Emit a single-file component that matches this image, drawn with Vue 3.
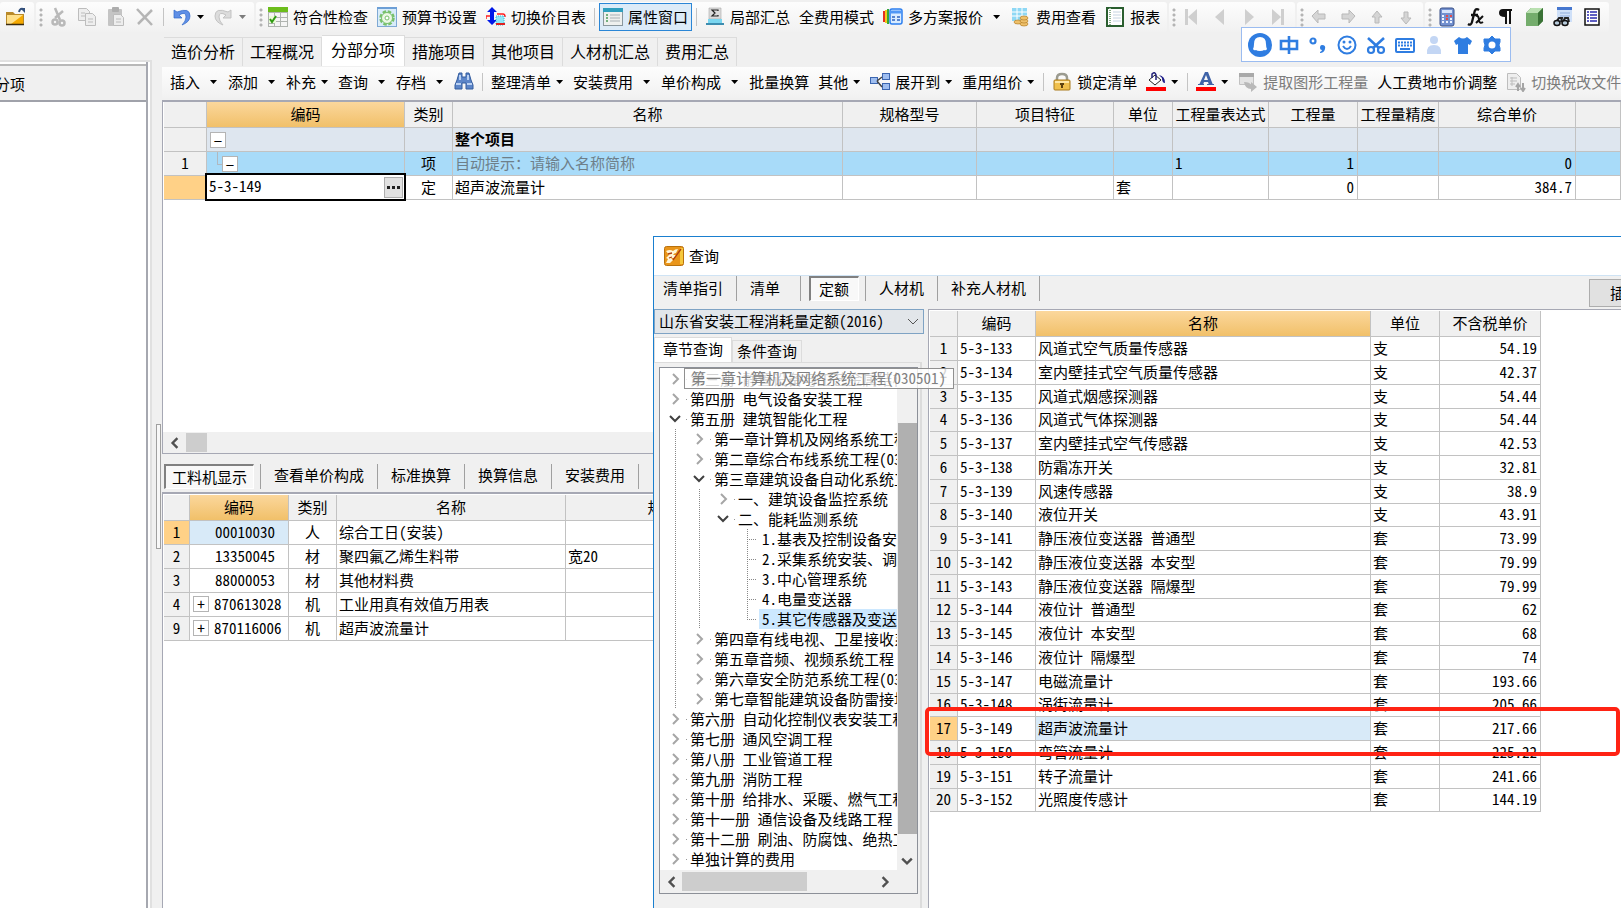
<script setup>
import { ref } from 'vue'

const icons = {
  folder: '<path d="M0 5h7l2 2h9v11H0z" fill="#b98a2a"/><path d="M1 8h16v9H1z" fill="#ffe08a"/><path d="M5 17L17 8v9z" fill="#f5a900"/><path d="M0 17.500h18" stroke="#3c2c10" stroke-width="1.500"/><path d="M13 5q1-4 4-3" fill="none" stroke="#33507c" stroke-width="2"/><path d="M14 1h5v5z" fill="#33507c"/>',
  cut: '<g fill="none" stroke="#b9b9b9" stroke-width="2.500"><path d="M7 1l5 12M15 4L7 11"/><circle cx="7" cy="15" r="2.500"/><circle cx="14" cy="16" r="2.500"/></g>',
  copy: '<g fill="#eee" stroke="#bdbdbd"><path d="M1.500 1.500h8l3 3v9h-11z"/><path d="M8.500 6.500h7l3 3v9h-10z"/><path d="M4 6h4M4 9h4M11 12h5M11 15h5"/></g>',
  paste: '<rect x="2" y="2" width="14" height="17" rx="1" fill="#c4c4c4"/><rect x="6" y="0" width="7" height="5" rx="1" fill="#adadad"/><path d="M7.500 7.500h7l3 3v8h-10z" fill="#ededed" stroke="#bcbcbc"/><path d="M10 12h5M10 15h5" stroke="#bcbcbc"/>',
  del: '<path d="M2 2l15 16M17 3L3 17" stroke="#b5b5b5" stroke-width="2.500" fill="none"/>',
  undo: '<path d="M2 3v8h8L7 8q7-4 7 2 0 4-4 8 8-3 8-9 0-9-13-4z" fill="#5f8fe6" stroke="#2f67c9" stroke-width=".7"/>',
  redo: '<path d="M17 3v8H9l3-3Q5 4 5 10q0 4 4 8-8-3-8-9 0-9 13-4z" fill="#dcdcdc" stroke="#c3c3c3"/>',
  check: '<path d="M0 0h20v20H0z" fill="#b0b4b0"/><path d="M0 0h20v5H0z" fill="#6cbd1c"/><path d="M1 6h5v4H1zm6 0h5v4H7zm6 0h6v4h-6zM7 11h5v3H7zm6 0h6v3h-6zM1 17h5v2H1zM7 15h5v4H7zm6 0h6v4h-6z" fill="#f5f5f5"/><path d="M1 9h7v7H1z" fill="#eafbd8"/><path d="M2 12l2 3 4-6" fill="none" stroke="#2f9b13" stroke-width="2"/>',
  gear: '<rect x=".5" y=".5" width="19" height="19" fill="#d9ecfa" stroke="#7fa9d4"/><path d="M0 1h20" stroke="#6d9fd6" stroke-width="2"/><circle cx="10" cy="11" r="6.500" fill="none" stroke="#77c06a" stroke-width="2.500" stroke-dasharray="3.500 1.600"/><circle cx="10" cy="11" r="5.500" fill="#ecf8e5" stroke="#77c06a"/><circle cx="10" cy="11" r="2" fill="#fff" stroke="#77c06a"/>',
  swap: '<path d="M6 0l5 5H8v8h3l-5 5-5-5h3V5H1z" fill="#0018e8"/><path d="M0 9h4M11 7h6q2 0 2 3M0 9v3" stroke="#ff2020" stroke-width="1.500" fill="none"/><path d="M10 9h8v9h-8z" fill="#8fe8f8" stroke="#38b8d8" stroke-dasharray="1 1"/><path d="M10 17h9" stroke="#e02020" stroke-width="2"/>',
  panel: '<rect x=".5" y="1.500" width="19" height="17" fill="#eef0ee" stroke="#8a979d"/><path d="M0 1h20v4H0z" fill="#2f9fbe"/><path d="M3 8h2M3 11h2M3 14h2" stroke="#4b9b5a" stroke-width="1.500"/><path d="M7 8h10M7 11h10M7 14h10" stroke="#a8b0b4"/>',
  sigma: '<path d="M4 1h12v11H4z" fill="#dcdcdc" stroke="#aaa" stroke-width=".6"/><path d="M13 4V3H7l3 3-3 3h6V8" fill="none" stroke="#222" stroke-width="1.200"/><path d="M3 12h14v4H3z" fill="#7ad6f0"/><path d="M1 17h18" stroke="#3d8db0" stroke-width="2"/>',
  multi: '<path d="M1 4v11" stroke="#e53020" stroke-width="2"/><path d="M3 3v13" stroke="#f3c91c" stroke-width="2"/><path d="M5 2v15" stroke="#38a838" stroke-width="2"/><rect x="7" y="2" width="12" height="15" rx="2" fill="#d9ecff" stroke="#2d7ff0" stroke-width="1.500"/><path d="M7 5h12" stroke="#4f97f6" stroke-width="3"/><path d="M9 10h3M14 10h3M9 13h3M14 13h3" stroke="#2d62c0" stroke-width="1.500"/>',
  coins: '<path d="M1 1h15v13H1z" fill="#8ed8f5"/><path d="M1 5h15M1 9h15M6 1v13M11 1v13" stroke="#fff"/><g fill="#eec06a" stroke="#b57f28" stroke-width=".7"><ellipse cx="7" cy="15" rx="4" ry="2"/><ellipse cx="13" cy="17" rx="4" ry="2"/><ellipse cx="13" cy="14" rx="4" ry="2"/><ellipse cx="13" cy="11" rx="4" ry="2"/></g>',
  report: '<rect x="2" y="1" width="16" height="18" fill="#fff" stroke="#2a5e2f" stroke-width="2"/><path d="M5 1v18" stroke="#8bb08f" stroke-width="2" stroke-dasharray="1 1"/><path d="M8 5h8M8 8h8M8 11h8M8 14h8" stroke="#c6d4e2"/>',
  first: '<path d="M4 2h3v16H4zM16 2v16L7 10z" fill="#cfcfcf"/>',
  prev: '<path d="M14 2v16L5 10z" fill="#cfcfcf"/>',
  next: '<path d="M6 2v16l9-8z" fill="#cfcfcf"/>',
  last: '<path d="M13 2h3v16h-3zM4 2v16l9-8z" fill="#cfcfcf"/>',
  left: '<path d="M3 9l6-6v4h7v5H9v4z" fill="#d5d5d5" stroke="#b9b9b9"/>',
  right: '<path d="M17 9l-6-6v4H4v5h7v4z" fill="#d5d5d5" stroke="#b9b9b9"/>',
  up: '<path d="M10 4l5 6h-3v6H8v-6H5z" fill="#d5d5d5" stroke="#b9b9b9"/>',
  down: '<path d="M10 17l5-6h-3V5H8v6H5z" fill="#d5d5d5" stroke="#b9b9b9"/>',
  calc: '<rect x="3" y="1" width="14" height="18" rx="2" fill="#7391d0" stroke="#384f86"/><path d="M5 3h10v3H5z" fill="#d6e4fb"/><path d="M5 9h10M5 12h10M5 15h10" stroke="#eef3ff" stroke-width="2" stroke-dasharray="2 2"/><path d="M9 9h6M9 12h2" stroke="#e24b4b" stroke-width="2" stroke-dasharray="2 2"/>',
  fx: '<path d="M13 3q-4-3-5 4L6 15q-1 4-4 2M5 8h7" fill="none" stroke="#111" stroke-width="2.300"/><path d="M10 9q3-1 3 5 1 3 4 1M17 9l-7 7" fill="none" stroke="#111" stroke-width="2"/>',
  para: '<path d="M6 2h11v2h-1v13h-2V4h-2v13h-2v-7Q4 10 4 6q0-4 4-4z" fill="#111"/>',
  cube: '<path d="M2 6l5-5h12v13l-5 5H2z" fill="#4b8a45"/><path d="M2 6l5-5h12l-5 5z" fill="#b9e0b0"/><path d="M2 6h12v13H2z" fill="#74ad6c"/><path d="M14 6l5-5v13l-5 5z" fill="#3a7236"/>',
  find2: '<path d="M4 0h15v15H4z" fill="#cfe0f8"/><path d="M4 0h15v3H4z" fill="#4677cf"/><path d="M7 6h10M7 9h10" stroke="#8facdc"/><path d="M3 15l3-4h3l-1 4M10 15l2-4h3l1 4" fill="none" stroke="#222" stroke-width="2"/><ellipse cx="4" cy="16" rx="3" ry="2.500" fill="#b8ccdc" stroke="#111" stroke-width="1.500"/><ellipse cx="12" cy="16" rx="3" ry="2.500" fill="#b8ccdc" stroke="#111" stroke-width="1.500"/>',
  list: '<rect x="3" y="2" width="14" height="16" fill="#fff" stroke="#111" stroke-width="1.500"/><path d="M5 5h2M5 8h2M5 11h2M5 14h2M8 5h7M8 8h7M8 11h7M8 14h7" stroke="#2b2bb0" stroke-width="1.500"/>',
  binoc: '<path d="M5 1h3v4h4V1h3l2 7 2 5v4h-7v-6H8v6H1v-4l2-5z" fill="#5c85c8" stroke="#335c9e"/><path d="M2 12h5M13 12h5M6 3v5M14 3v5" stroke="#b9d0f2" stroke-width="2"/>',
  tree: '<g fill="#9fbef0" stroke="#3c66b0"><rect x=".5" y="5.500" width="7" height="6"/><rect x="12.500" y="1.500" width="7" height="6"/><rect x="12.500" y="11.500" width="7" height="6"/></g><path d="M7 9l5-4M7 9l5 6" stroke="#444" stroke-width="1.500" fill="none"/>',
  lock: '<path d="M5 9V6q0-4 5-4t5 4v3" fill="none" stroke="#9b9b90" stroke-width="2.500"/><rect x="2" y="8" width="16" height="10" rx="1" fill="#f0c04c" stroke="#a97a1c"/><path d="M3 10h14" stroke="#ffe7a4" stroke-width="2"/><path d="M10 11v5M8 12h4" stroke="#5d4210" stroke-width="2"/>',
  fill: '<path d="M9 3l6 5-6 5-6-5z" fill="#fff" stroke="#222"/><path d="M6 6V2q3-3 4 1v5" fill="none" stroke="#22227a" stroke-width="1.500"/><path d="M13 3q6 1 6 8-3 0-3-5z" fill="#1d1d8a"/><path d="M0 15h20v4H0z" fill="#f00"/>',
  font: '<path d="M9 0h3l5 13h-4l-1-3H8l-1 3H3zM10 3L8 8h4z" fill="#3f63a8" fill-rule="evenodd"/><path d="M2 12.500h6M11 12.500h7" stroke="#3f63a8"/><path d="M0 15h20v4H0z" fill="#f00"/>',
  extract: '<path d="M1.500 1.500h14v11h-14z" fill="#e4e4e4" stroke="#c2c2c2"/><path d="M1 1h15v4H1z" fill="#a9a9a9"/><path d="M6 10q6 0 7 3v-3l6 5-6 5v-3q-6 0-7-7z" fill="#b9b9b9"/>',
  tax: '<path d="M1.500 1.500h9l4 4v12h-13z" fill="#eee" stroke="#bdbdbd"/><path d="M4 6h7M4 9h7M4 12h5M6 5v9" stroke="#bdbdbd"/><path d="M12 19v-6M10 15l2-3 2 3M17 11v7M15 16l2 3 2-3" stroke="#a5a5a5" stroke-width="2" fill="none"/>',
  app: '<rect x=".5" y=".5" width="19" height="19" rx="2" fill="#e9951a" stroke="#b9710c"/><path d="M16 2h3v16h-3z" fill="#f6c83c"/><path d="M2 5q4-2 7 0 2-2 5-2l-2 4q-2 0-3 2l3 0-2 3-3 0 2 2-3 3H2l2-4-2-1 3-3z" fill="#fff5d8"/><path d="M17 3L9 14M4 8l4-1M5 12l3-1" stroke="#b03c10" stroke-width="1.300"/>',
  chat: '<circle cx="12" cy="12" r="12" fill="#2f7de1"/><path d="M12 4q6 0 6 7 0 3 1 5-1 2-3 1-1 1-4 1t-4-1q-2 1-3-1 1-2 1-5 0-7 6-7z" fill="#fff"/>',
  zhong: '<path d="M4 8h16v8H4zM12 3v18" fill="none" stroke="#2f7de1" stroke-width="2.600"/>',
  punct: '<circle cx="7" cy="8" r="2.500" fill="none" stroke="#2f7de1" stroke-width="2.200"/><path d="M16 12q4 0 3 4-1 4-5 4l0-1q2-1 2-2-2 0-2-2 0-3 2-3z" fill="#2f7de1"/>',
  smile: '<circle cx="12" cy="12" r="8.500" fill="none" stroke="#2f7de1" stroke-width="2"/><path d="M8 13q4 6 8 0" fill="none" stroke="#2f7de1" stroke-width="2"/><circle cx="9" cy="9" r="1.500" fill="#2f7de1"/><circle cx="15" cy="9" r="1.500" fill="#2f7de1"/>',
  scissors: '<path d="M4 5l12 11M20 5L8 16" stroke="#2f7de1" stroke-width="2.600"/><circle cx="7" cy="17" r="3" fill="#fff" stroke="#2f7de1" stroke-width="2.200"/><circle cx="17" cy="17" r="3" fill="#fff" stroke="#2f7de1" stroke-width="2.200"/>',
  keyboard: '<rect x="3" y="6" width="18" height="13" rx="1" fill="none" stroke="#2f7de1" stroke-width="2"/><path d="M5 9.500h14M5 12.500h14" stroke="#2f7de1" stroke-width="2" stroke-dasharray="2 1"/><path d="M7 16h10" stroke="#2f7de1" stroke-width="2"/>',
  user: '<circle cx="12" cy="7" r="4" fill="#c3d6f4"/><path d="M5 21q-1-9 7-9t7 9z" fill="#c3d6f4"/>',
  shirt: '<path d="M8 4q4 3 8 0l5 4-2 4-2-1v10H7V11l-2 1-2-4z" fill="#2f7de1"/>',
  cog: '<path d="M12 3l3 3 5 0 0 3-1 3 1 3 0 3-5 0-3 3-3-3-5 0 0-3 1-3-1-3 0-3 5 0z" fill="#2f7de1" stroke="#2f7de1"/><circle cx="12" cy="12" r="3.500" fill="#fff"/>'
}

const groups = [
  { items: [{ icon: 'folder', label: '打开' }] },
  {
    grip: true,
    items: [
      { icon: 'cut', label: '剪切' }, { icon: 'copy', label: '复制' }, { icon: 'paste', label: '粘贴' }, { icon: 'del', label: '删除' },
      { sep: true }, { icon: 'undo', label: '撤销', arrow: 'tight' }, { icon: 'redo', label: '重做', arrow: 'tight', dim: true }
    ]
  },
  {
    grip: true,
    items: [
      { icon: 'check', text: '符合性检查' }, { icon: 'gear', text: '预算书设置' }, { icon: 'swap', text: '切换价目表' }, { sep: true },
      { icon: 'panel', text: '属性窗口', active: true }, { sep: true }, { icon: 'sigma', text: '局部汇总' }, { text: '全费用模式' },
      { icon: 'multi', text: '多方案报价', arrow: 'split' }, { icon: 'coins', text: '费用查看' }, { icon: 'report', text: '报表' }
    ]
  },
  {
    grip: true,
    items: [{ icon: 'first', label: '首条' }, { icon: 'prev', label: '上一条' }, { icon: 'next', label: '下一条' }, { icon: 'last', label: '末条' }]
  },
  {
    grip: true,
    items: [{ icon: 'left', label: '升级' }, { icon: 'right', label: '降级' }, { icon: 'up', label: '上移' }, { icon: 'down', label: '下移' }]
  },
  {
    grip: true,
    items: [
      { icon: 'calc', label: '计算器' }, { icon: 'fx', label: '函数' }, { icon: 'para', label: '段落' },
      { icon: 'cube', label: '图形' }, { icon: 'find2', label: '查找' }, { icon: 'list', label: '列表' }
    ]
  }
]

const tools = [
  { text: '插入', arrow: 'split' }, { text: '添加', arrow: 'split' }, { text: '补充', arrow: 'tight' }, { text: '查询', arrow: 'split' },
  { text: '存档', arrow: 'split' }, { icon: 'binoc', label: '查找' }, { sep: true }, { text: '整理清单', arrow: 'tight' },
  { text: '安装费用', arrow: 'split' }, { text: '单价构成', arrow: 'split' }, { text: '批量换算' }, { text: '其他', arrow: 'tight' },
  { icon: 'tree', text: '展开到', arrow: 'tight' }, { text: '重用组价', arrow: 'tight' }, { sep: true }, { icon: 'lock', text: '锁定清单' },
  { icon: 'fill', label: '填充颜色', arrow: 'tight' }, { sep: true }, { icon: 'font', label: '字体颜色', arrow: 'tight' },
  { icon: 'extract', text: '提取图形工程量', dim: true }, { text: '人工费地市价调整' }, { icon: 'tax', text: '切换税改文件', dim: true }
]

const mainTabs = ['造价分析', '工程概况', '分部分项', '措施项目', '其他项目', '人材机汇总', '费用汇总']
const mainTab = ref('分部分项')
const mainHead = ['', '编码', '类别', '名称', '规格型号', '项目特征', '单位', '工程量表达式', '工程量', '工程量精度', '综合单价', '']
const code = ref('5-3-149')

const detailTabs = ['工料机显示', '查看单价构成', '标准换算', '换算信息', '安装费用']
const detailTab = ref('工料机显示')
const details = [
  { n: 1, code: '00010030', kind: '人', name: '综合工日(安装)', spec: '' },
  { n: 2, code: '13350045', kind: '材', name: '聚四氟乙烯生料带', spec: '宽20' },
  { n: 3, code: '88000053', kind: '材', name: '其他材料费', spec: '' },
  { n: 4, code: '870613028', kind: '机', name: '工业用真有效值万用表', spec: '', plus: true },
  { n: 9, code: '870116006', kind: '机', name: '超声波流量计', spec: '', plus: true }
]

const imeItems = [
  ['chat', '输入法'], ['zhong', '中文'], ['punct', '标点'], ['smile', '表情'], ['scissors', '截图'],
  ['keyboard', '键盘'], ['user', '账户'], ['shirt', '皮肤'], ['cog', '设置']
]

const queryTabs = ['清单指引', '清单', '定额', '人材机', '补充人材机']
const queryTab = ref('定额')
const library = ref('山东省安装工程消耗量定额(2016)')

const nodes = [
  { d: 0, text: '第三册 静置设备与工艺金属结构' },
  { d: 0, text: '第四册 电气设备安装工程' },
  { d: 0, text: '第五册 建筑智能化工程', open: true },
  { d: 1, text: '第一章计算机及网络系统工程(030501)' },
  { d: 1, text: '第二章综合布线系统工程(030502)' },
  { d: 1, text: '第三章建筑设备自动化系统工程', open: true },
  { d: 2, text: '一、建筑设备监控系统' },
  { d: 2, text: '二、能耗监测系统', open: true },
  { d: 3, text: '1.基表及控制设备安装' },
  { d: 3, text: '2.采集系统安装、调试' },
  { d: 3, text: '3.中心管理系统' },
  { d: 3, text: '4.电量变送器' },
  { d: 3, text: '5.其它传感器及变送器', selected: true },
  { d: 1, text: '第四章有线电视、卫星接收系统' },
  { d: 1, text: '第五章音频、视频系统工程' },
  { d: 1, text: '第六章安全防范系统工程(030507)' },
  { d: 1, text: '第七章智能建筑设备防雷接地' },
  { d: 0, text: '第六册 自动化控制仪表安装工程' },
  { d: 0, text: '第七册 通风空调工程' },
  { d: 0, text: '第八册 工业管道工程' },
  { d: 0, text: '第九册 消防工程' },
  { d: 0, text: '第十册 给排水、采暖、燃气工程' },
  { d: 0, text: '第十一册 通信设备及线路工程' },
  { d: 0, text: '第十二册 刷油、防腐蚀、绝热工程' },
  { d: 0, text: '单独计算的费用' }
]

const quota = [
  ['风道式空气质量传感器', '支', '54.19'], ['室内壁挂式空气质量传感器', '支', '42.37'], ['风道式烟感探测器', '支', '54.44'],
  ['风道式气体探测器', '支', '54.44'], ['室内壁挂式空气传感器', '支', '42.53'], ['防霜冻开关', '支', '32.81'],
  ['风速传感器', '支', '38.9'], ['液位开关', '支', '43.91'], ['静压液位变送器 普通型', '套', '73.99'],
  ['静压液位变送器 本安型', '套', '79.99'], ['静压液位变送器 隔爆型', '套', '79.99'], ['液位计 普通型', '套', '62'],
  ['液位计 本安型', '套', '68'], ['液位计 隔爆型', '套', '74'], ['电磁流量计', '套', '193.66'], ['涡街流量计', '套', '205.66'],
  ['超声波流量计', '套', '217.66'], ['弯管流量计', '套', '225.22'], ['转子流量计', '套', '241.66'], ['光照度传感计', '套', '144.19']
]
</script>

<template>
  <div class="app">
    <header class="topbar">
      <div v-for="(g, gi) in groups" :key="gi" class="group">
        <span v-if="g.grip" class="grip"></span>
        <template v-for="(t, ti) in g.items" :key="ti">
          <span v-if="t.sep" class="sep"></span>
          <button v-else class="tool" :class="{ active: t.active, dim: t.dim, roomy: t.arrow }" :aria-label="t.label">
            <svg v-if="t.icon" class="icon" viewBox="0 0 20 20" v-html="icons[t.icon]"></svg>
            <span v-if="t.text">{{ t.text }}</span>
            <span v-if="t.arrow" class="arrow" :class="t.arrow"></span>
          </button>
        </template>
      </div>
    </header>

    <div class="workspace">
      <aside class="side">
        <div class="side-panel">
          <div class="side-head"><span>分部分项</span></div>
          <div class="side-body"></div>
        </div>
      </aside>
      <div class="splitter"><span class="handle"></span></div>

      <main class="main">
        <nav class="main-tabs">
          <button v-for="t in mainTabs" :key="t" :class="{ on: t === mainTab }" @click="mainTab = t">{{ t }}</button>
        </nav>
        <div class="toolbar">
          <template v-for="(t, ti) in tools" :key="ti">
            <span v-if="t.sep" class="sep"></span>
            <button v-else class="tool" :class="{ dim: t.dim, roomy: t.arrow }" :aria-label="t.label">
              <svg v-if="t.icon" class="icon" viewBox="0 0 20 20" v-html="icons[t.icon]"></svg>
              <span v-if="t.text">{{ t.text }}</span>
              <span v-if="t.arrow" class="arrow" :class="t.arrow"></span>
            </button>
          </template>
        </div>

        <section class="pane upper">
          <div class="pane-body">
            <table class="grid main-grid">
              <colgroup>
                <col v-for="(h, i) in mainHead" :key="i" :class="'m' + i" />
              </colgroup>
              <thead>
                <tr><th v-for="(h, i) in mainHead" :key="i" :class="{ gold: i === 1 }">{{ h }}</th></tr>
              </thead>
              <tbody>
                <tr class="group-row">
                  <th></th>
                  <td class="branch"><button class="box" aria-label="折叠整个项目">−</button></td>
                  <td></td><td class="strong">整个项目</td>
                  <td v-for="i in 8" :key="i"></td>
                </tr>
                <tr class="item-row">
                  <th>1</th>
                  <td class="branch nested"><button class="box" aria-label="折叠第1项">−</button></td>
                  <td class="mid">项</td><td class="hint">自动提示：请输入名称简称</td>
                  <td></td><td></td><td></td><td>1</td><td class="num">1</td><td></td><td class="num">0</td><td></td>
                </tr>
                <tr>
                  <th class="current"></th>
                  <td class="editing">
                    <div class="editor">
                      <input v-model="code" aria-label="编码" />
                      <button aria-label="选择定额"><i></i><i></i><i></i></button>
                    </div>
                  </td>
                  <td class="mid">定</td><td>超声波流量计</td>
                  <td></td><td></td><td>套</td><td></td><td class="num">0</td><td></td><td class="num">384.7</td><td></td>
                </tr>
              </tbody>
            </table>
          </div>
          <div class="hscroll">
            <svg viewBox="0 0 10 10"><path d="M7 1L3 5l4 4" /></svg>
            <span class="thumb short"></span>
          </div>
        </section>

        <nav class="flat-tabs detail-tabs">
          <button v-for="t in detailTabs" :key="t" :class="{ on: t === detailTab }" @click="detailTab = t">{{ t }}</button>
        </nav>

        <section class="pane lower">
          <table class="grid detail-grid">
            <colgroup><col class="d0" /><col class="d1" /><col class="d2" /><col class="d3" /><col class="d4" /><col /></colgroup>
            <thead>
              <tr><th></th><th class="gold">编码</th><th>类别</th><th>名称</th><th>规格型号</th><th></th></tr>
            </thead>
            <tbody>
              <tr v-for="(r, i) in details" :key="r.n">
                <th :class="{ current: i === 0 }">{{ r.n }}</th>
                <td class="code" :class="{ picked: i === 0 }">
                  <div><button v-if="r.plus" class="box" :aria-label="'展开' + r.code">+</button><span>{{ r.code }}</span></div>
                </td>
                <td class="mid">{{ r.kind }}</td>
                <td>{{ r.name }}</td>
                <td>{{ r.spec }}</td>
                <td></td>
              </tr>
            </tbody>
          </table>
        </section>
      </main>
    </div>

    <div class="ime">
      <button v-for="[k, l] in imeItems" :key="k" :aria-label="l">
        <svg viewBox="0 0 24 24" v-html="icons[k]"></svg>
      </button>
    </div>

    <section class="dialog" aria-label="查询">
      <div class="title">
        <svg class="icon" viewBox="0 0 20 20" v-html="icons.app"></svg>
        <span>查询</span>
      </div>
      <div class="query-bar">
        <nav class="flat-tabs query-tabs">
          <button v-for="t in queryTabs" :key="t" :class="{ on: t === queryTab }" @click="queryTab = t">{{ t }}</button>
        </nav>
        <button class="insert">插入</button>
      </div>
      <div class="query-body">
        <div class="catalog">
          <div class="combo">
            <select v-model="library" aria-label="定额库">
              <option>山东省安装工程消耗量定额(2016)</option>
            </select>
            <svg viewBox="0 0 12 12"><path d="M1 3l5 5 5-5" /></svg>
          </div>
          <div class="sheet-tabs">
            <button class="on">章节查询</button>
            <button>条件查询</button>
          </div>
          <div class="sheet">
            <div class="tree-box">
              <div class="tree-row">
                <ul class="tree">
                  <li v-for="n in nodes" :key="n.text">
                    <span v-for="g in n.d" :key="g" class="guide" :class="{ line: g < 3 }"></span>
                    <span v-if="n.d === 3" class="elbow" :class="{ end: n.selected }"></span>
                    <button v-else class="chev" :class="{ open: n.open }" :aria-label="n.text">
                      <svg viewBox="0 0 12 12"><path :d="n.open ? 'M1 3l5 5 5-5' : 'M4 1l5 5-5 5'" /></svg>
                    </button>
                    <span class="node" :class="{ selected: n.selected }">{{ n.text }}</span>
                  </li>
                </ul>
                <div class="vscroll">
                  <span class="thumb"></span>
                  <svg viewBox="0 0 10 10"><path d="M1 3l4 4 4-4" /></svg>
                </div>
              </div>
              <div class="hscroll tree-h">
                <svg viewBox="0 0 10 10"><path d="M7 1L3 5l4 4" /></svg>
                <span class="thumb long"></span>
                <svg class="far" viewBox="0 0 10 10"><path d="M3 1l4 4-4 4" /></svg>
              </div>
              <div class="tip">第一章计算机及网络系统工程(030501)</div>
            </div>
          </div>
        </div>
        <div class="result">
          <table class="grid quota-grid">
            <colgroup><col class="q0" /><col class="q1" /><col class="q2" /><col class="q3" /><col class="q4" /></colgroup>
            <thead>
              <tr><th></th><th>编码</th><th class="gold">名称</th><th>单位</th><th>不含税单价</th></tr>
            </thead>
            <tbody>
              <tr v-for="(r, i) in quota" :key="r[0]">
                <th :class="{ current: i === 16 }">{{ i + 1 }}</th>
                <td>5-3-{{ 133 + i }}</td>
                <td :class="{ picked: i === 16 }">{{ r[0] }}</td>
                <td>{{ r[1] }}</td>
                <td class="num">{{ r[2] }}</td>
              </tr>
            </tbody>
          </table>
          <div class="mark"></div>
        </div>
      </div>
    </section>
  </div>
</template>

<style>
body { margin: 0; overflow: hidden; }
</style>

<style scoped>
* { box-sizing: border-box; }
.app {
  position: relative;
  display: flex;
  flex-direction: column;
  height: 100vh;
  overflow: hidden;
  background: #f0f0f0;
  color: #000;
  font-family: "Noto Sans CJK SC", sans-serif;
  font-feature-settings: "hwid";
  font-size: 15px;
  line-height: 20px;
  white-space: nowrap;
}
button, input, select {
  font: inherit;
  font-feature-settings: inherit;
  color: inherit;
  margin: 0;
  padding: 0;
  border: 0;
  background: none;
  white-space: nowrap;
}
.icon { width: 20px; height: 20px; flex: none; }

/* toolbars */
.topbar { display: flex; gap: 2px; padding-top: 2px; height: 35px; flex: none; }
.group {
  display: flex;
  align-items: center;
  gap: 1px;
  height: 30px;
  padding-right: 3px;
  flex: none;
  border-radius: 3px;
  background: linear-gradient(#fdfdfd, #f1f1f1);
}
.group:first-child { padding-left: 2px; padding-right: 4px; }
.grip {
  width: 7px;
  height: 19px;
  background: radial-gradient(circle at 5px 2px, #b4b4b4 1px, transparent 2px);
  background-size: 7px 5px;
}
.tool { display: flex; align-items: center; gap: 5px; height: 28px; padding: 0 4px; flex: none; }
.tool.active { background: #dcebf8; box-shadow: inset 0 0 0 1px #2b86d6; }
.tool.dim { color: #7c7c7c; }
.tool.roomy { padding-right: 5px; }
.sep { width: 1px; height: 18px; margin: 0 3px; background: #c4c4c4; flex: none; }
.arrow {
  width: 7px;
  height: 4px;
  background: currentColor;
  clip-path: polygon(0 0, 100% 0, 50% 100%);
}
.arrow.split { margin: 0 1px 0 5px; }
.toolbar {
  display: flex;
  align-items: center;
  gap: 1px;
  height: 31px;
  padding: 0 0 1px 4px;
  flex: none;
  overflow: hidden;
  background: linear-gradient(#fdfdfd, #f1f1f1);
}

/* left side */
.workspace { display: flex; flex: 1; min-height: 0; }
.side { width: 152px; flex: none; margin-top: 25px; border-top: 2px solid #e0e0e0; border-right: 2px solid #e0e0e0; background: #fff; }
.side-panel { display: flex; flex-direction: column; height: 100%; width: 148px; padding-top: 2px; border-right: 2px solid #a6a8b0; }
.side-head { display: flex; justify-content: flex-end; height: 38px; padding: 8px 121px 0 0; border-top: 2px solid #b8b8b8; border-bottom: 2px solid #a0a2aa; background: #f0f0f0; }
.side-body { flex: 1; background: #fff; }
.splitter { display: flex; align-items: center; justify-content: center; width: 10px; padding-top: 30px; flex: none; }
.handle { width: 5px; height: 125px; margin-left: 2px; border: 1px solid #a0a0a0; background: #f8f8f8; }

/* main area */
.main { display: flex; flex-direction: column; flex: 1; min-width: 0; }
.main-tabs { display: flex; align-items: flex-end; height: 32px; padding-left: 2px; flex: none; font-size: 16px; border-bottom: 1px solid #f0f0f0; }
.main-tabs button { height: 29px; padding: 0 7px 2px; border: 1px solid #dcdcdc; border-width: 1px 1px 0 0; }
.main-tabs .on { height: 31px; padding: 0 9px 4px; background: #fff; }
.pane { border: 1px solid #a6a8b4; border-width: 2px 0 0 1px; background: #fff; }
.upper { display: flex; flex-direction: column; flex: none; margin-top: 2px; border-bottom-width: 1px; }
.pane-body { height: 330px; padding-left: 1px; }
.lower { flex: 1; padding: 1px 0 0 1px; }

.grid { border-collapse: separate; border-spacing: 0; table-layout: fixed; }
.grid th, .grid td {
  height: 24px;
  padding: 0 2px 2px;
  border: 1px solid #c2c2c2;
  border-width: 0 1px 1px 0;
  font-weight: 400;
  text-align: left;
  line-height: 20px;
  overflow: hidden;
}
.grid th { background: #f0f0f0; text-align: center; padding: 0 0 2px; }
.grid thead th { height: 26px; }
.grid th.gold { background: linear-gradient(#fbd79c, #f1c069); }
.grid th.current { background: #ffd187; }
.grid .num { text-align: right; padding-right: 3px; }
.grid .mid { text-align: center; }
.grid .strong { font-weight: 700; }
.grid .picked { background: #d8eaf8; }
.main-grid, .detail-grid { width: 100%; }
.m0 { width: 43px; } .m1 { width: 198px; } .m2 { width: 48px; } .m3 { width: 390px; }
.m4 { width: 134px; } .m5 { width: 137px; } .m6 { width: 59px; } .m7 { width: 96px; }
.m8 { width: 89px; } .m9 { width: 81px; } .m10 { width: 137px; }
.group-row td { background: #dee6ef; }
.item-row td { background: #a8dbf9; }
.item-row .hint { color: #6e7f8a; }
.box { width: 16px; height: 16px; border: 1px solid #b4b4b4; background: #fff; line-height: 13px; font-size: 15px; vertical-align: middle; }
.grid .branch { padding: 0 0 0 3px; line-height: 16px; }
.grid .nested { padding-left: 15px; background: linear-gradient(#b0b8c0, #b0b8c0) 10px 0 / 1px 12px no-repeat, linear-gradient(#b0b8c0, #b0b8c0) 10px 12px / 6px 1px no-repeat, #a8dbf9; }
.grid .editing { position: relative; overflow: visible; }
.editor { position: absolute; inset: -3px -2px -2px -2px; display: flex; align-items: center; border: 2px solid #000; background: #fff; }
.editor input { flex: 1; min-width: 0; padding: 0 0 2px 2px; outline: 0; }
.editor button { display: flex; align-items: center; justify-content: center; gap: 2px; width: 19px; height: 21px; margin-right: 1px; border: 1px solid #adadad; background: #e1e1e1; }
.editor i { width: 3px; height: 3px; background: #222; }

.hscroll { display: flex; align-items: center; height: 21px; padding-left: 6px; background: #f0f0f0; }
.hscroll svg, .vscroll svg { width: 12px; height: 12px; fill: none; stroke: #505050; stroke-width: 2; flex: none; }
.hscroll .thumb { height: 19px; margin-left: 5px; background: #cdcdcd; }
.short { width: 21px; }
.long { width: 125px; }

.flat-tabs { display: flex; align-items: center; flex: none; }
.flat-tabs button { height: 25px; padding: 0 13px 2px; border-right: 1px solid #a0a0a0; text-align: left; }
.flat-tabs .on {
  height: 25px;
  margin-right: 6px;
  padding: 0 6px;
  border: 1px solid #fff;
  border-top: 2px solid #808080;
  border-left: 2px solid #808080;
  background: #f8f8f8;
  outline: 0;
}
.detail-tabs { height: 38px; padding: 6px 0 0 2px; }
.detail-tabs .on + button, .query-tabs .on + button { border-left: 1px solid #a0a0a0; }
.d0 { width: 26px; } .d1 { width: 99px; } .d2 { width: 48px; } .d3 { width: 229px; } .d4 { width: 224px; }
.code div { display: flex; align-items: center; gap: 5px; padding-left: 1px; }
.code span:first-child { margin-left: 22px; }

/* floating input bar */
.ime { position: absolute; left: 1241px; top: 27px; display: flex; align-items: center; gap: 5px; height: 35px; padding: 0 6px; border: 1px solid #9bbcf0; background: #fff; }
.ime button, .ime svg { display: block; width: 24px; height: 24px; }

/* query window */
.dialog { position: absolute; left: 653px; top: 236px; right: 0; bottom: 0; display: flex; flex-direction: column; border: 1px solid #1a7fcf; border-width: 1px 0 0 1px; background: #f0f0f0; }
.title { display: flex; align-items: center; gap: 5px; height: 39px; padding: 0 0 1px 10px; flex: none; border-bottom: 1px solid #cfe3f4; background: #fff; }
.query-bar { display: flex; justify-content: space-between; height: 33px; flex: none; overflow: hidden; }
.query-tabs { align-items: flex-start; }
.query-tabs button { min-width: 64px; }
.query-tabs button:first-child { padding-left: 9px; }
.query-tabs .on { min-width: 50px; margin-left: 8px; padding: 0 8px; }
.insert { width: 32px; height: 28px; margin-top: 3px; padding-left: 20px; overflow: hidden; border: 1px solid #adadad; border-right: 0; background: #e1e1e1; text-align: left; }
.query-body { display: flex; flex: 1; min-height: 0; }
.catalog { display: flex; flex-direction: column; width: 274px; flex: none; }
.combo { position: relative; width: 270px; height: 25px; margin-bottom: 3px; flex: none; }
.combo select { width: 100%; height: 100%; padding: 0 0 2px 4px; appearance: none; border: 1px solid #7fa3c4; background: #e2e6ea; }
.combo svg { position: absolute; right: 5px; top: 7px; width: 12px; height: 12px; fill: none; stroke: #555; stroke-width: 1; pointer-events: none; }
.sheet-tabs { display: flex; align-items: flex-end; height: 25px; flex: none; }
.sheet-tabs button { height: 22px; padding: 0 4px 1px; border: 1px solid #dcdcdc; border-bottom: 0; }
.sheet-tabs .on { height: 25px; padding: 0 8px 3px; background: #fff; }
.sheet { flex: 1; width: 268px; padding: 4px 2px 0 5px; border-top: 1px solid #dcdcdc; border-right: 2px solid #dcdcdc; }
.tree-box { position: relative; border: 1px solid #8c9098; background: #fff; }
.tree-row { display: flex; }
.tree { flex: 1; min-width: 0; margin: 0; padding: 1px 0 1px 3px; list-style: none; overflow: hidden; }
.tree li { display: flex; height: 20px; }
.guide, .elbow, .chev { width: 24px; height: 20px; flex: none; }
.guide.line { background: repeating-linear-gradient(#888 0 1px, transparent 1px 2px) 12px 0 / 1px 100% no-repeat; }
.elbow { background: repeating-linear-gradient(#888 0 1px, transparent 1px 2px) 12px 0 / 1px 100% no-repeat, repeating-linear-gradient(90deg, #888 0 1px, transparent 1px 2px) 12px 10px / 10px 1px no-repeat; }
.elbow.end { background-size: 1px 11px, 10px 1px; }
.chev { display: flex; align-items: center; justify-content: center; background: linear-gradient(#999, #999) 23px 10px / 1px 1px no-repeat; }
.chev svg { width: 12px; height: 12px; fill: none; stroke: #a6a6a6; stroke-width: 2; }
.chev.open svg { stroke: #404040; }
.node { padding: 0 3px; line-height: 19px; }
.selected { background: #cce8ff; }
.vscroll { display: flex; flex-direction: column; align-items: center; width: 20px; padding: 55px 0 3px; flex: none; background: #f0f0f0; }
.vscroll .thumb { width: 19px; height: 411px; background: #b0b0b0; }
.vscroll svg { margin-top: auto; }
.tree-h { height: 23px; }
.tree-h .thumb { margin-left: 4px; }
.tree-h .far { margin-left: auto; margin-right: 26px; }
.tip { position: absolute; left: 24px; top: 0; height: 21px; padding: 0 7px 0 6px; border: 1px solid #909090; background: rgba(255, 255, 255, .82); color: #808080; line-height: 18px; z-index: 2; }
.result { position: relative; flex: 1; min-width: 0; padding: 1px 0 0 1px; border: 1px solid #a6a8b4; border-width: 1px 0 0 1px; background: #fff; }
.quota-grid { width: 611px; }
.q0 { width: 28px; } .q1 { width: 78px; } .q2 { width: 335px; } .q3 { width: 69px; } .q4 { width: 101px; }
.quota-grid tbody tr:nth-child(4n) th, .quota-grid tbody tr:nth-child(4n) td { height: 23px; }
.mark { position: absolute; left: -4px; right: 1px; top: 397px; height: 49px; border: 4px solid #ff2314; border-radius: 5px; }
</style>
